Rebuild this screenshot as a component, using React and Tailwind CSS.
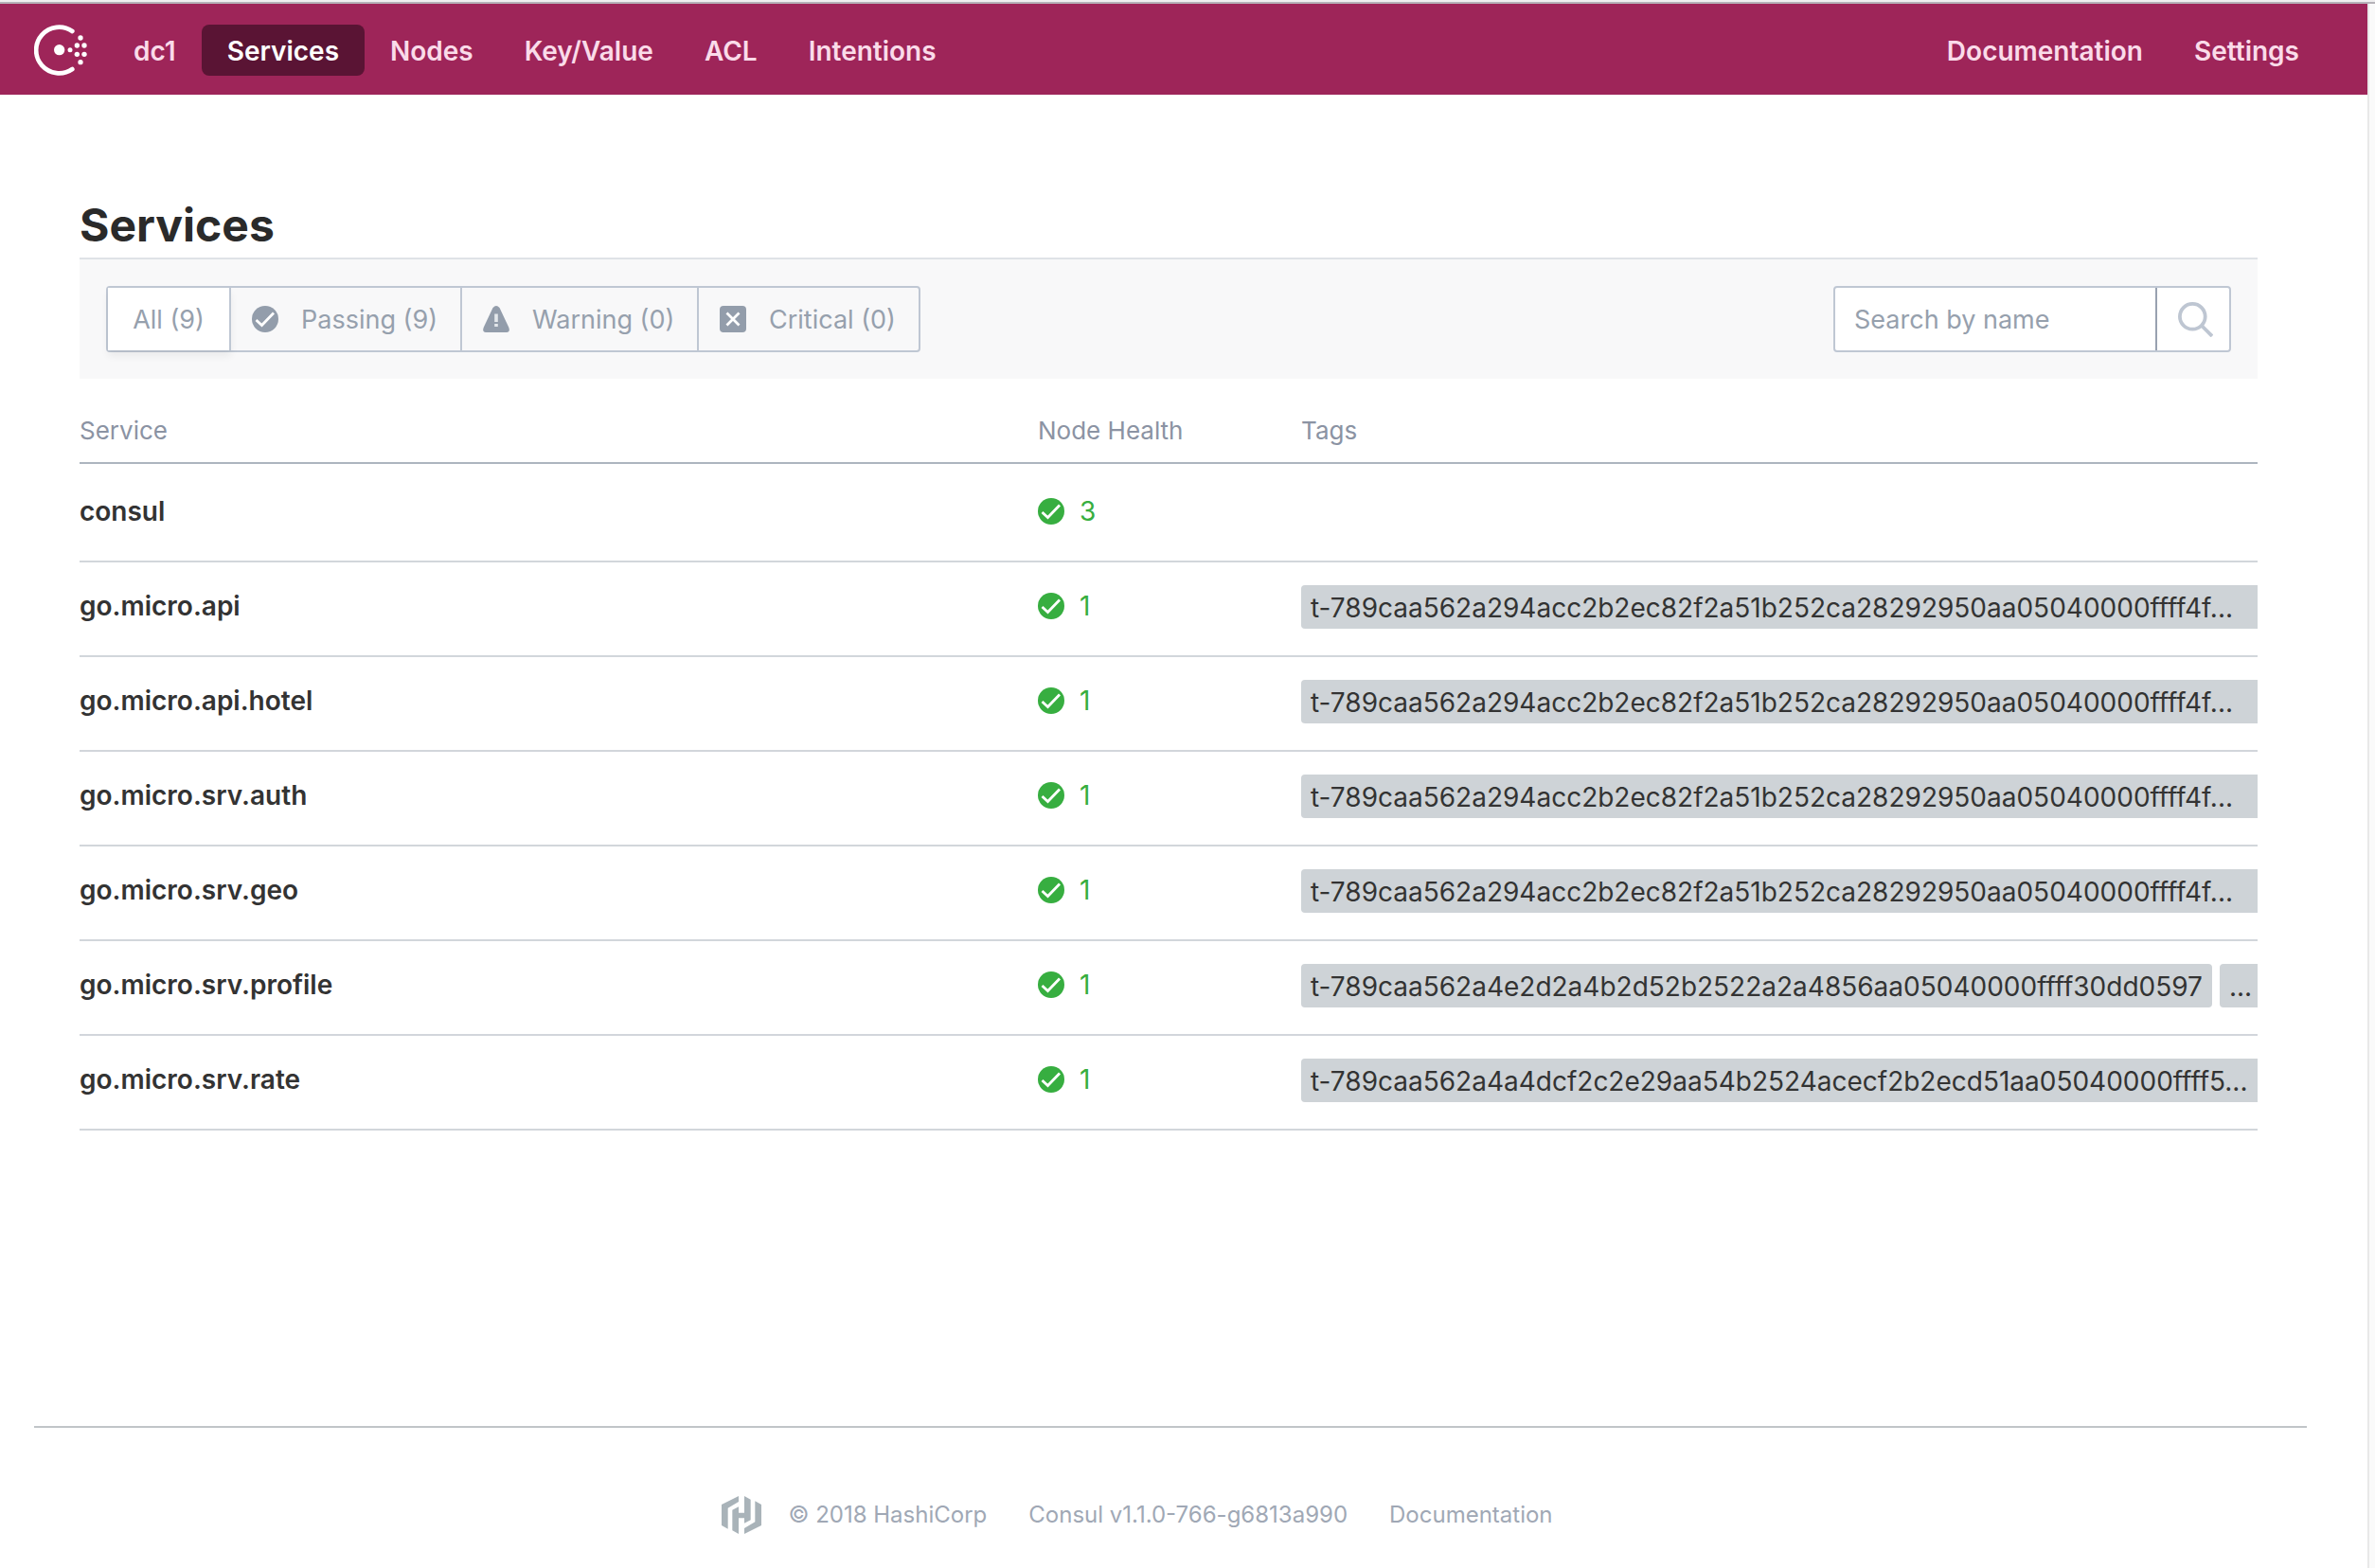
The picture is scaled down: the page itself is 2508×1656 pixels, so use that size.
import React, { useState } from 'react'

const navLinks = ['Services', 'Nodes', 'Key/Value', 'ACL', 'Intentions'];

const services = [
  { name: 'consul', checks: 3, tags: [] },
  { name: 'go.micro.api', checks: 1, tags: ['t-789caa562a294acc2b2ec82f2a51b252ca28292950aa05040000ffff4f...'] },
  { name: 'go.micro.api.hotel', checks: 1, tags: ['t-789caa562a294acc2b2ec82f2a51b252ca28292950aa05040000ffff4f...'] },
  { name: 'go.micro.srv.auth', checks: 1, tags: ['t-789caa562a294acc2b2ec82f2a51b252ca28292950aa05040000ffff4f...'] },
  { name: 'go.micro.srv.geo', checks: 1, tags: ['t-789caa562a294acc2b2ec82f2a51b252ca28292950aa05040000ffff4f...'] },
  { name: 'go.micro.srv.profile', checks: 1, tags: ['t-789caa562a4e2d2a4b2d52b2522a2a4856aa05040000ffff30dd0597', '...'] },
  { name: 'go.micro.srv.rate', checks: 1, tags: ['t-789caa562a4a4dcf2c2e29aa54b2524acecf2b2ecd51aa05040000ffff5...'] },
];

const ConsulLogo = () => (
  <svg viewBox="0 0 168 162" className="w-14 h-[54px] shrink-0" aria-hidden="true">
    <path d="M121 21A73 73 0 1 0 121 141" fill="none" stroke="#fff" strokeWidth="14" strokeLinecap="round" />
    <g fill="#fff">
      <circle cx="80" cy="80" r="17" />
      <circle cx="114" cy="80" r="7.5" />
      <circle cx="136" cy="66" r="8" />
      <circle cx="136" cy="94" r="8" />
      <circle cx="159" cy="66" r="8" />
      <circle cx="159" cy="94" r="8" />
      <circle cx="147" cy="42" r="8" />
      <circle cx="147" cy="119" r="8" />
    </g>
  </svg>
);

const HashiCorpLogo = () => (
  <svg viewBox="0 0 126 120" className="w-[42px] h-10 shrink-0" fill="#a9b3b9" aria-hidden="true">
    <path d="M54 0v18L20 38v66L0 93V27z" />
    <path d="M34 44L54 34V53H72V0L92 11V76L72 86V70H54V120L34 109z" />
    <path d="M106 16L126 27V93L72 120V102L106 82z" />
  </svg>
);

const PassingIcon = ({ className }) => (
  <svg viewBox="0 0 28 28" className={className} aria-hidden="true">
    <circle cx="14" cy="14" r="14" fill="currentColor" />
    <path d="M4.5 15l6 5.5L23 7.5" fill="none" stroke="#fff" strokeWidth="2.8" />
  </svg>
);

const WarningIcon = ({ className }) => (
  <svg viewBox="0 0 28 28" className={className} aria-hidden="true">
    <path d="M10.5 2Q14-1.8 17.5 2L27.4 23Q28.8 28 25 28H3Q-.8 28 .6 23z" fill="currentColor" />
    <path d="M12.2 8.5h3.6V17h-3.6zM12.2 19h3.6v3h-3.6z" fill="#e4e8ec" />
  </svg>
);

const CriticalIcon = ({ className }) => (
  <svg viewBox="0 0 28 28" className={className} aria-hidden="true">
    <rect width="28" height="28" rx="4" fill="currentColor" />
    <path d="M7.5 7.5l13 13M20.5 7.5l-13 13" fill="none" stroke="#fff" strokeWidth="2.8" />
  </svg>
);

const SearchIcon = () => (
  <svg viewBox="0 0 37 37" className="w-[37px] h-[37px]" fill="none" stroke="#bec6d2" strokeWidth="3.8" aria-hidden="true">
    <circle cx="15.3" cy="15.3" r="13.4" />
    <path d="M25 25l11 11" />
  </svg>
);

const filters = [
  { value: 'all', label: 'All (9)', width: 'w-[130px]' },
  { value: 'passing', label: 'Passing (9)', icon: PassingIcon, width: 'w-[244px]' },
  { value: 'warning', label: 'Warning (0)', icon: WarningIcon, width: 'w-[250px]' },
  { value: 'critical', label: 'Critical (0)', icon: CriticalIcon, width: 'w-[232px]' },
];

const Header = () => (
  <header className="flex items-center bg-[#9e2559] h-24 pt-0.5 pl-9 pr-[45px] text-[28px] leading-8 font-semibold text-[#fadbe9]">
    <ConsulLogo />
    <nav className="flex flex-1 items-center ml-[22px]">
      <a href="#dc1" className="px-[27px] pt-3 pb-2.5">dc1</a>
      {navLinks.map((link) => (
        <a
          key={link}
          href={`#${link}`}
          className={link === 'Services' ? 'px-[27px] pt-3 pb-2.5 rounded-lg bg-[#5a1434] text-white' : 'px-[27px] pt-3 pb-2.5'}
        >
          {link}
        </a>
      ))}
    </nav>
    <nav className="flex items-center">
      <a href="#docs" className="px-[27px] pt-3 pb-2.5">Documentation</a>
      <a href="#settings" className="px-[27px] pt-3 pb-2.5">Settings</a>
    </nav>
  </header>
);

const FilterBar = ({ status, setStatus, search, setSearch }) => (
  <form className="flex items-center justify-between h-32 px-7 border-t-2 border-[#dfe2e7] bg-[#f8f8f9] text-[27px] leading-8 text-[#96a0ad]">
    <fieldset className="flex h-[70px] border-2 border-[#bfc7d3] rounded divide-x-2 divide-[#bfc7d3]">
      {filters.map(({ value, label, icon: Icon, width }) => (
        <label
          key={value}
          className={`${width} flex items-center cursor-pointer ${Icon ? 'pl-[22px]' : 'justify-center'} ${status === value ? 'bg-white shadow-[0_6px_8px_rgba(0,0,0,0.06)]' : ''}`}
        >
          <input
            type="radio"
            name="status"
            value={value}
            checked={status === value}
            onChange={() => setStatus(value)}
            className="sr-only"
          />
          {Icon && <Icon className="w-7 h-7 mr-6 shrink-0 text-[#939dab]" />}
          <span className="pt-0.5 whitespace-nowrap">{label}</span>
        </label>
      ))}
    </fieldset>
    <div className="flex w-[420px] h-[70px] border-2 border-[#bfc7d3] rounded bg-white">
      <input
        type="text"
        aria-label="Search by name"
        placeholder="Search by name"
        value={search}
        onChange={(e) => setSearch(e.target.value)}
        className="flex-1 min-w-0 pt-0.5 px-5 outline-none placeholder:text-[#96a0ad]"
      />
      <button type="button" aria-label="Search" className="flex items-center justify-center w-[78px] pl-1 border-l-2 border-[#98a1b0]">
        <SearchIcon />
      </button>
    </div>
  </form>
);

const ServiceTable = ({ rows }) => (
  <table className="w-full table-fixed text-left text-[28px] leading-8">
    <thead className="text-[26px] text-[#8b93a3]">
      <tr className="h-[89px] border-b-2 border-[#adb5bf]">
        <th className="w-[44%] pt-[22px] font-normal">Service</th>
        <th className="w-[278px] pt-[22px] font-normal">Node Health</th>
        <th className="pt-[22px] font-normal">Tags</th>
      </tr>
    </thead>
    <tbody>
      {rows.map(({ name, checks, tags }, row) => (
        <tr key={name} className="h-[100px] first:h-[104px] border-b-2 border-[#d2d6db]">
          <td className={`pb-1.5 font-semibold text-[#333333] ${row === 0 ? 'pt-1' : ''}`}>
            <a href={`#${name}`}>{name}</a>
          </td>
          <td className={`pb-1.5 ${row === 0 ? 'pt-1' : ''}`}>
            <div className="flex items-center gap-4 text-[#37ae40]">
              <PassingIcon className="w-7 h-7" />
              <span>{checks}</span>
            </div>
          </td>
          <td className="pb-1">
            <div className="flex gap-2 overflow-hidden text-[#333333]">
              {tags.map((tag, i) => (
                <span
                  key={tag}
                  className={`h-[46px] px-2.5 pt-2 bg-[#ced3d7] whitespace-nowrap rounded-l ${i === tags.length - 1 ? 'flex-1' : 'rounded-r'}`}
                >
                  {tag}
                </span>
              ))}
            </div>
          </td>
        </tr>
      ))}
    </tbody>
  </table>
);

const Footer = () => (
  <footer className="flex items-center justify-center h-[150px] ml-9 mr-16 pt-9 pr-[70px] border-t-2 border-[#c1c5c8] text-2xl leading-8 text-[#a0a8b5]">
    <HashiCorpLogo />
    <span className="ml-7">© 2018 HashiCorp</span>
    <span className="ml-11">Consul v1.1.0-766-g6813a990</span>
    <a href="#docs" className="ml-11">Documentation</a>
  </footer>
);

const App = () => {
  const [status, setStatus] = useState('all');
  const [search, setSearch] = useState('');

  // every service is passing, so the other two filters are empty
  const rows = services.filter(
    (service) => (status === 'all' || status === 'passing') && service.name.includes(search)
  );

  return (
    <div className="flex flex-col min-h-screen bg-white font-['Inter',sans-serif]">
      <div className="h-1 bg-[#f0eff0] border-b-2 border-[#b5b2b8]"></div>
      <div className="flex flex-1">
        <div className="flex flex-1 flex-col min-w-0">
          <Header />
          <main className="flex-1 pl-[84px] pr-[116px] pt-[108px]">
            <h1 className="h-16 text-[48px] leading-[60px] font-bold text-[#2a2a2a]">Services</h1>
            <FilterBar status={status} setStatus={setStatus} search={search} setSearch={setSearch} />
            <ServiceTable rows={rows} />
          </main>
          <Footer />
        </div>
        {/* scrollbar gutter */}
        <div className="w-2 border-l-2 border-[#e8e8e8] bg-[#fafafa]"></div>
      </div>
    </div>
  )
}

export default App
